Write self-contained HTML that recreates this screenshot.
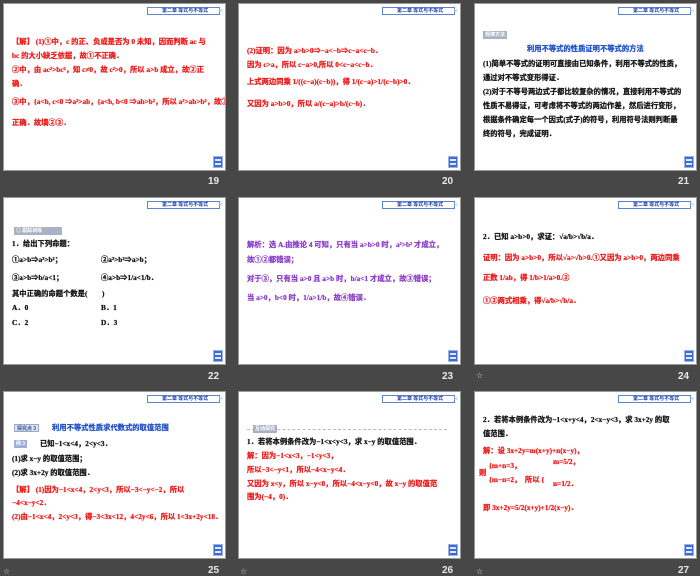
<!DOCTYPE html>
<html><head><meta charset="utf-8"><style>
*{margin:0;padding:0;box-sizing:border-box}
body{width:700px;height:576px;background:#474747;position:relative;overflow:hidden;font-family:"Liberation Serif","Noto Serif CJK SC","Noto Sans CJK SC",serif}
.s{position:absolute;width:223px;height:168px;background:#fff;border:1px solid #9a9a9a;overflow:hidden}
.tab{position:absolute;left:143px;top:3px;width:73px;height:8px;border:1px solid #5b84d4;background:#fff;font:bold 5px "Noto Sans CJK SC",sans-serif;color:#1f3fa8;line-height:6px;padding-left:14px;white-space:nowrap}
.chev{position:absolute;left:214px;top:2px;width:8px;height:10px;color:#b8c8e8;font:9px "DejaVu Sans",sans-serif;line-height:10px}
.ic{position:absolute;left:209px;top:152px;width:10px;height:12px;background:#3d6bd6;border:1px solid #9bb3e8}
.ic:before,.ic:after{content:"";position:absolute;left:1px;width:6px;height:2px;background:#dfe8fb}
.ic:before{top:2px}.ic:after{top:6px}
.l{position:absolute;white-space:nowrap;font-size:7.3px;font-weight:bold;line-height:8px;font-family:"Liberation Serif","Noto Sans CJK SC",serif;-webkit-text-stroke:0.25px currentColor}
.r{color:#f01818}.k{color:#111}.p{color:#8a3cc8}.b{color:#1f4fc8}
.n{position:absolute;color:#e8e8e8;font:bold 10px "Liberation Sans",sans-serif}
.st{position:absolute;color:#cfcfcf;font:8px "DejaVu Sans",sans-serif}
.badge{position:absolute;height:8px;background:#a9b2c4;color:#fff;font:bold 5px "Noto Sans CJK SC",sans-serif;line-height:8px;padding:0 2px}
</style></head><body>

<!-- 19 -->
<div class="s" style="left:3px;top:3px">
<div class="tab">第二章 等式与不等式</div><div class="chev">»</div>
<div class="l r" style="left:8px;top:34px">【解】 (1)①中，c 的正、负或是否为 0 未知，因而判断 ac 与</div>
<div class="l r" style="left:8px;top:48px">bc 的大小缺乏依据，故①不正确．</div>
<div class="l r" style="left:8px;top:62px">②中，由 ac²&gt;bc²，知 c≠0，故 c²&gt;0，所以 a&gt;b 成立，故②正</div>
<div class="l r" style="left:8px;top:76px">确．</div>
<div class="l r" style="left:8px;top:94px">③中，{a&lt;b, c&lt;0 ⇒a²&gt;ab，{a&lt;b, b&lt;0 ⇒ab&gt;b²，所以 a²&gt;ab&gt;b²，故③</div>
<div class="l r" style="left:8px;top:115px">正确．故填②③．</div>
<div class="ic"></div></div>
<div class="n" style="left:208px;top:176px">19</div>

<!-- 20 -->
<div class="s" style="left:238px;top:3px">
<div class="tab">第二章 等式与不等式</div><div class="chev">»</div>
<div class="l r" style="left:8px;top:43px">(2)证明：因为 a&gt;b&gt;0⇒−a&lt;−b⇒c−a&lt;c−b．</div>
<div class="l r" style="left:8px;top:57px">因为 c&gt;a，所以 c−a&gt;0,所以 0&lt;c−a&lt;c−b．</div>
<div class="l r" style="left:8px;top:74px">上式两边同乘 1/((c−a)(c−b))，得 1/(c−a)&gt;1/(c−b)&gt;0．</div>
<div class="l r" style="left:8px;top:96px">又因为 a&gt;b&gt;0，所以 a/(c−a)&gt;b/(c−b)．</div>
<div class="ic"></div></div>
<div class="n" style="left:442px;top:176px">20</div>

<!-- 21 -->
<div class="s" style="left:474px;top:3px">
<div class="tab">第二章 等式与不等式</div><div class="chev">»</div>
<div class="badge" style="left:8px;top:27px">规律方法</div>
<div class="l b" style="left:52px;top:41px">利用不等式的性质证明不等式的方法</div>
<div class="l k" style="left:8px;top:56px">(1)简单不等式的证明可直接由已知条件，利用不等式的性质，</div>
<div class="l k" style="left:8px;top:70px">通过对不等式变形得证．</div>
<div class="l k" style="left:8px;top:84px">(2)对于不等号两边式子都比较复杂的情况，直接利用不等式的</div>
<div class="l k" style="left:8px;top:98px">性质不易得证，可考虑将不等式的两边作差，然后进行变形，</div>
<div class="l k" style="left:8px;top:112px">根据条件确定每一个因式(式子)的符号，利用符号法则判断最</div>
<div class="l k" style="left:8px;top:126px">终的符号，完成证明．</div>
<div class="ic"></div></div>
<div class="n" style="left:678px;top:176px">21</div>

<!-- 22 -->
<div class="s" style="left:3px;top:197px">
<div class="tab">第二章 等式与不等式</div><div class="chev">»</div>
<div class="badge" style="left:10px;top:29px;width:48px">◎ 跟踪训练</div>
<div class="l k" style="left:8px;top:42px">1．给出下列命题：</div>
<div class="l k" style="left:8px;top:58px">①a&gt;b⇒a²&gt;b²；</div><div class="l k" style="left:97px;top:58px">②a²&gt;b²⇒a&gt;b；</div>
<div class="l k" style="left:8px;top:76px">③a&gt;b⇒b/a&lt;1；</div><div class="l k" style="left:97px;top:76px">④a&gt;b⇒1/a&lt;1/b．</div>
<div class="l k" style="left:8px;top:92px">其中正确的命题个数是(　　)</div>
<div class="l k" style="left:8px;top:106px">A．0</div><div class="l k" style="left:97px;top:106px">B．1</div>
<div class="l k" style="left:8px;top:121px">C．2</div><div class="l k" style="left:97px;top:121px">D．3</div>
<div class="ic"></div></div>
<div class="n" style="left:208px;top:371px">22</div>

<!-- 23 -->
<div class="s" style="left:238px;top:197px">
<div class="tab">第二章 等式与不等式</div><div class="chev">»</div>
<div class="l p" style="left:8px;top:43px">解析：选 A.由推论 4 可知，只有当 a&gt;b&gt;0 时，a²&gt;b² 才成立，</div>
<div class="l p" style="left:8px;top:58px">故①②都错误；</div>
<div class="l p" style="left:8px;top:77px">对于③，只有当 a&gt;0 且 a&gt;b 时，b/a&lt;1 才成立，故③错误；</div>
<div class="l p" style="left:8px;top:96px">当 a&gt;0，b&lt;0 时，1/a&gt;1/b，故④错误．</div>
<div class="ic"></div></div>
<div class="n" style="left:442px;top:371px">23</div>

<!-- 24 -->
<div class="s" style="left:474px;top:197px">
<div class="tab">第二章 等式与不等式</div><div class="chev">»</div>
<div class="l k" style="left:8px;top:35px">2．已知 a&gt;b&gt;0，求证：√a/b&gt;√b/a．</div>
<div class="l r" style="left:8px;top:56px">证明：因为 a&gt;b&gt;0，所以√a&gt;√b&gt;0.①又因为 a&gt;b&gt;0，两边同乘</div>
<div class="l r" style="left:8px;top:76px">正数 1/ab，得 1/b&gt;1/a&gt;0.②</div>
<div class="l r" style="left:8px;top:99px">①②两式相乘，得√a/b&gt;√b/a．</div>
<div class="ic"></div></div>
<div class="st" style="left:476px;top:371px">☆</div>
<div class="n" style="left:678px;top:371px">24</div>

<!-- 25 -->
<div class="s" style="left:3px;top:391px">
<div class="tab">第二章 等式与不等式</div><div class="chev">»</div>
<div class="badge" style="left:10px;top:32px;background:#dfe4ef;color:#3050a0;border:1px solid #9aa8c8">探究点 3</div>
<div class="l b" style="left:48px;top:32px">利用不等式性质求代数式的取值范围</div>
<div class="badge" style="left:10px;top:48px;background:#9fb0d8">例 3</div>
<div class="l k" style="left:36px;top:48px">已知−1&lt;x&lt;4，2&lt;y&lt;3．</div>
<div class="l k" style="left:8px;top:63px">(1)求 x−y 的取值范围；</div>
<div class="l k" style="left:8px;top:77px">(2)求 3x+2y 的取值范围．</div>
<div class="l r" style="left:8px;top:94px">【解】 (1)因为−1&lt;x&lt;4，2&lt;y&lt;3，所以−3&lt;−y&lt;−2，所以</div>
<div class="l r" style="left:8px;top:107px">−4&lt;x−y&lt;2．</div>
<div class="l r" style="left:8px;top:121px">(2)由−1&lt;x&lt;4，2&lt;y&lt;3，得−3&lt;3x&lt;12，4&lt;2y&lt;6，所以 1&lt;3x+2y&lt;18．</div>
<div class="ic"></div></div>
<div class="st" style="left:3px;top:567px">☆</div>
<div class="n" style="left:208px;top:565px">25</div>

<!-- 26 -->
<div class="s" style="left:238px;top:391px">
<div class="tab">第二章 等式与不等式</div><div class="chev">»</div>
<div style="position:absolute;left:8px;top:37px;width:200px;border-top:1px dashed #b8b8c8"></div>
<div class="badge" style="left:14px;top:33px">互动探究</div>
<div class="l k" style="left:8px;top:46px">1．若将本例条件改为−1&lt;x&lt;y&lt;3，求 x−y 的取值范围．</div>
<div class="l r" style="left:8px;top:60px">解：因为−1&lt;x&lt;3，−1&lt;y&lt;3，</div>
<div class="l r" style="left:8px;top:74px">所以−3&lt;−y&lt;1，所以−4&lt;x−y&lt;4．</div>
<div class="l r" style="left:8px;top:88px">又因为 x&lt;y，所以 x−y&lt;0，所以−4&lt;x−y&lt;0，故 x−y 的取值范</div>
<div class="l r" style="left:8px;top:101px">围为(−4，0)．</div>
<div class="ic"></div></div>
<div class="st" style="left:240px;top:567px">☆</div>
<div class="n" style="left:442px;top:565px">26</div>

<!-- 27 -->
<div class="s" style="left:474px;top:391px">
<div class="tab">第二章 等式与不等式</div><div class="chev">»</div>
<div class="l k" style="left:8px;top:24px">2．若将本例条件改为−1&lt;x+y&lt;4，2&lt;x−y&lt;3，求 3x+2y 的取</div>
<div class="l k" style="left:8px;top:38px">值范围．</div>
<div class="l r" style="left:8px;top:55px">解：设 3x+2y=m(x+y)+n(x−y)，</div>
<div class="l r" style="left:14px;top:70px">{m+n=3，</div>
<div class="l r" style="left:4px;top:77px">则</div>
<div class="l r" style="left:14px;top:84px">{m−n=2，　所以 {</div>
<div class="l r" style="left:78px;top:66px">m=5/2，</div>
<div class="l r" style="left:78px;top:88px">n=1/2．</div>
<div class="l r" style="left:8px;top:112px">即 3x+2y=5/2(x+y)+1/2(x−y)．</div>
<div class="ic"></div></div>
<div class="st" style="left:476px;top:567px">☆</div>
<div class="n" style="left:678px;top:565px">27</div>

</body></html>
